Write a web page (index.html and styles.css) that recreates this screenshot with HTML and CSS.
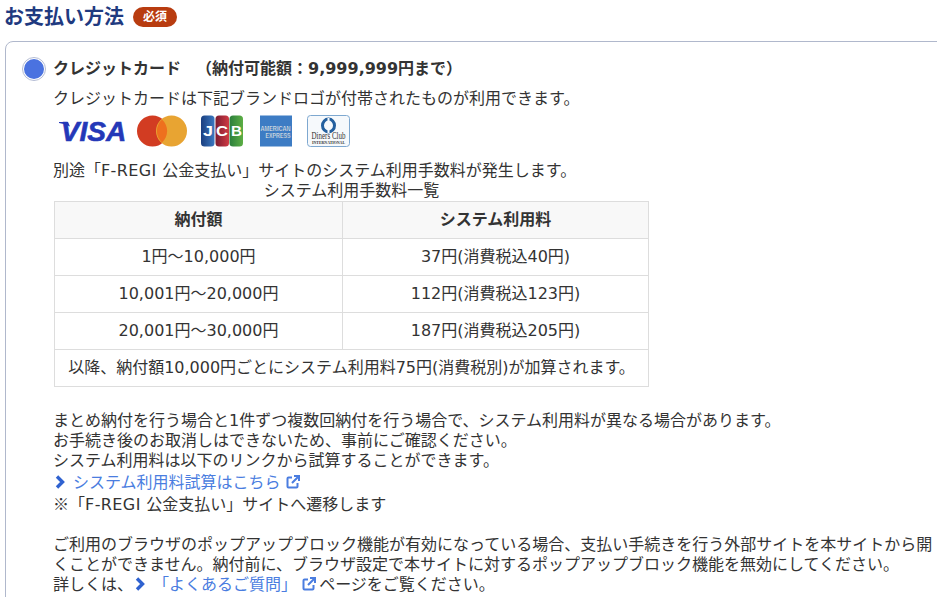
FILE: index.html
```html
<!DOCTYPE html>
<html lang="ja">
<head>
<meta charset="utf-8">
<title>お支払い方法</title>
<link rel="stylesheet" href="styles.css">
</head>
<body>
<div class="page">
  <div class="heading">
    <h2 class="title">お支払い方法</h2>
    <span class="badge">必須</span>
  </div>
  <section class="card">
    <div class="option">
      <span class="radio"><span class="radio-dot"></span></span>
      <span class="option-label">クレジットカード　<span class="limit">（納付可能額：9,999,999円まで）</span></span>
    </div>
    <div class="body">
      <p class="line">クレジットカードは下記ブランドロゴが付帯されたものが利用できます。</p>
      <div class="brands">
        <svg class="brand brand-visa" width="68" height="32" viewBox="0 0 68 32"><text x="34.500" y="26" text-anchor="middle" class="visa-text">VISA</text><path d="M0 7h9l2 4.500Q6 8.500 0 8z" fill="#2438b8"/></svg>
        <svg class="brand brand-mc" width="50" height="32" viewBox="0 0 50 32"><circle cx="15.500" cy="16" r="15.500" fill="#d23c22"/><circle cx="34.500" cy="16" r="15.500" fill="#e8a432"/><path d="M25 4.500a15.500 15.500 0 0 1 0 23a15.500 15.500 0 0 1 0-23z" fill="#ee701e"/></svg>
        <svg class="brand brand-jcb" width="42" height="32" viewBox="0 0 42 32">
          <defs>
            <linearGradient id="jb" x1="0" x2="1" y1="0" y2="0"><stop offset="0" stop-color="#1a3f80"/><stop offset="1" stop-color="#3b78c0"/></linearGradient>
            <linearGradient id="jr" x1="0" x2="1" y1="0" y2="0"><stop offset="0" stop-color="#7c1c30"/><stop offset="1" stop-color="#d03a44"/></linearGradient>
            <linearGradient id="jg" x1="0" x2="1" y1="0" y2="0"><stop offset="0" stop-color="#2c7f3c"/><stop offset="1" stop-color="#5cae44"/></linearGradient>
          </defs>
          <rect x="0" y="0.500" width="13.500" height="31" rx="3.500" fill="url(#jb)"/>
          <rect x="14.500" y="0.500" width="13.500" height="31" rx="3.500" fill="url(#jr)"/>
          <rect x="28.500" y="0.500" width="13.500" height="31" rx="3.500" fill="url(#jg)"/>
          <text x="2" y="21" class="jcb-text" textLength="10" lengthAdjust="spacingAndGlyphs">J</text>
          <text x="15" y="21" class="jcb-text" textLength="12" lengthAdjust="spacingAndGlyphs">C</text>
          <text x="30" y="21" class="jcb-text" textLength="11" lengthAdjust="spacingAndGlyphs">B</text>
        </svg>
        <svg class="brand brand-amex" width="32" height="32" viewBox="0 0 32 32"><rect width="32" height="31" y="0.500" fill="#3d7cc4"/><text x="0.500" y="15.500" class="amex-text" textLength="30" lengthAdjust="spacingAndGlyphs">AMERICAN</text><text x="5.500" y="22.500" class="amex-text" textLength="25" lengthAdjust="spacingAndGlyphs">EXPRESS</text></svg>
        <svg class="brand" width="43" height="32" viewBox="0 0 43 32"><rect x="0.500" y="0.500" width="42" height="31" rx="3" fill="#f6f9fc" stroke="#7ea8d0"/><ellipse cx="21.500" cy="10.500" rx="6" ry="6.500" fill="none" stroke="#24609f" stroke-width="3"/><rect x="20.500" y="3" width="2" height="15" fill="#f6f9fc"/><text x="4.500" y="24" class="diners-text" textLength="34" lengthAdjust="spacingAndGlyphs">Diners Club</text><text x="5" y="29" class="diners-small" textLength="33" lengthAdjust="spacingAndGlyphs">INTERNATIONAL</text></svg>
      </div>
      <p class="line">別途「<span class="latin">F-REGI </span>公金支払い」サイトのシステム利用手数料が発生します。</p>
      <table class="fees">
        <caption>システム利用手数料一覧</caption>
        <thead>
          <tr><th class="col-a">納付額</th><th>システム利用料</th></tr>
        </thead>
        <tbody>
          <tr><td>1円～10,000円</td><td>37円(消費税込40円)</td></tr>
          <tr><td>10,001円～20,000円</td><td>112円(消費税込123円)</td></tr>
          <tr><td>20,001円～30,000円</td><td>187円(消費税込205円)</td></tr>
          <tr><td colspan="2">以降、納付額10,000円ごとにシステム利用料75円(消費税別)が加算されます。</td></tr>
        </tbody>
      </table>
      <div class="notes">
        <p class="line">まとめ納付を行う場合と1件ずつ複数回納付を行う場合で、システム利用料が異なる場合があります。</p>
        <p class="line">お手続き後のお取消しはできないため、事前にご確認ください。</p>
        <p class="line">システム利用料は以下のリンクから試算することができます。</p>
        <p class="line line-link">
          <svg class="chev" width="12" height="14" viewBox="0 0 12 14"><path d="M3 1.500L8.500 7L3 12.500" fill="none" stroke="#2f62d0" stroke-width="3.400"/></svg><a class="link" href="#">システム利用料試算はこちら</a>
          <svg class="ext" width="14" height="14" viewBox="0 0 14 14"><path d="M6 2.500H2.500a1 1 0 0 0-1 1v8a1 1 0 0 0 1 1h8a1 1 0 0 0 1-1V8M8 1h5v5M12.500 1.500L6 8" fill="none" stroke="#4a7de0" stroke-width="2"/></svg>
        </p>
        <p class="line"><span class="cjk">※</span>「<span class="latin">F-REGI </span>公金支払い」サイトへ遷移します</p>
      </div>
      <div class="notes">
        <p class="line">ご利用のブラウザのポップアップブロック機能が有効になっている場合、支払い手続きを行う外部サイトを本サイトから開くことができません。納付前に、ブラウザ設定で本サイトに対するポップアップブロック機能を無効にしてください。</p>
        <p class="line">詳しくは、<svg class="chev" width="12" height="14" viewBox="0 0 12 14"><path d="M3 1.500L8.500 7L3 12.500" fill="none" stroke="#2f62d0" stroke-width="3.400"/></svg><a class="link" href="#">「よくあるご質問」</a>
          <svg class="ext ext-inline" width="14" height="14" viewBox="0 0 14 14"><path d="M6 2.500H2.500a1 1 0 0 0-1 1v8a1 1 0 0 0 1 1h8a1 1 0 0 0 1-1V8M8 1h5v5M12.500 1.500L6 8" fill="none" stroke="#4a7de0" stroke-width="2"/></svg>ページをご覧ください。</p>
      </div>
    </div>
  </section>
</div>
</body>
</html>
```
FILE: styles.css
```css
html, body {
  margin: 0;
  padding: 0;
  background: #fff;
  overflow: hidden;
  height: 597px;
}
body {
  font-family: "DejaVu Sans", "Noto Sans CJK JP", sans-serif;
  font-size: 16px;
  line-height: 20px;
  color: #333;
}
.page {
  width: 1000px;
  padding: 3px 0 0 5px;
}
.heading {
  display: flex;
  align-items: center;
  gap: 9px;
  height: 26px;
}
.title {
  margin: 0 0 0 -1px;
  font-family: "Noto Sans CJK JP", sans-serif;
  font-size: 20px;
  line-height: 26px;
  font-weight: 700;
  color: #1f3a80;
}
.badge {
  width: 44px;
  height: 20px;
  margin-top: 2px;
  border-radius: 10px;
  background: #b83c10;
  color: #fff;
  font-size: 12px;
  font-weight: 700;
  line-height: 20px;
  text-align: center;
}
.card {
  margin-top: 12px;
  width: 940px;
  border: 1px solid #b0b8cc;
  border-radius: 8px;
  padding: 16px 0 40px 16px;
  height: 560px;
}
.option {
  display: flex;
  align-items: center;
  gap: 7px;
  height: 22px;
}
.radio {
  width: 22px;
  height: 22px;
  border: 1px solid #b4bcd4;
  border-radius: 50%;
  display: flex;
  align-items: center;
  justify-content: center;
  background: #fff;
  flex: none;
}
.radio-dot {
  width: 20px;
  height: 20px;
  border-radius: 50%;
  background: #4a72e0;
}
.option-label {
  font-weight: 700;
}
.limit {
  margin-left: 7px;
}
.body {
  padding: 9px 0 0 31px;
}
.line {
  margin: 0;
}
.line-link {
  line-height: 24px;
}
.latin {
  letter-spacing: 0.4px;
}
.cjk {
  font-family: "Noto Sans CJK JP", sans-serif;
  line-height: 0;
}
.brands {
  display: flex;
  align-items: center;
  height: 32px;
  margin: 6px 0 14px;
  padding-left: 6px;
}
.brand {
  flex: none;
  display: block;
}
.brand-visa {
  margin-right: 10px;
}
.brand-mc {
  margin-right: 14px;
}
.brand-jcb {
  margin-right: 17px;
}
.brand-amex {
  margin-right: 15px;
}
.visa-text {
  font-family: "Liberation Sans", sans-serif;
  font-size: 28px;
  font-weight: 700;
  font-style: italic;
  fill: #2438b8;
  stroke: #2438b8;
  stroke-width: 0.6px;
}
.jcb-text {
  font-family: "Liberation Sans", sans-serif;
  font-size: 14px;
  font-weight: 700;
  fill: #fff;
}
.amex-text {
  font-family: "Liberation Sans", sans-serif;
  font-size: 6.500px;
  font-weight: 700;
  fill: #f0f6fc;
  stroke: #24578f;
  stroke-width: 0.2px;
}
.diners-text {
  font-family: "Liberation Serif", serif;
  font-size: 10.500px;
  fill: #333;
}
.diners-small {
  font-family: "Liberation Serif", serif;
  font-size: 4.500px;
  font-weight: 700;
  fill: #333;
}
.fees {
  border-collapse: collapse;
  width: 595px;
  margin: 0 0 0 1px;
  table-layout: fixed;
  text-align: center;
}
.fees caption {
  height: 20px;
  line-height: 20px;
}
.fees th, .fees td {
  border: 1px solid #ddd;
  height: 36px;
  padding: 0;
}
.fees th {
  background: #f8f8f8;
  font-weight: 700;
}
.col-a {
  width: 287px;
}
.notes {
  margin-top: 24px;
  width: 880px;
}
.notes + .notes {
  margin-top: 20px;
}
.link {
  color: #4a7de0;
  text-decoration: none;
}
.chev {
  vertical-align: -1px;
  margin-left: 1px;
  margin-right: 7px;
}
.ext {
  vertical-align: -1px;
}
.ext-inline {
  margin-right: 3px;
}
```
